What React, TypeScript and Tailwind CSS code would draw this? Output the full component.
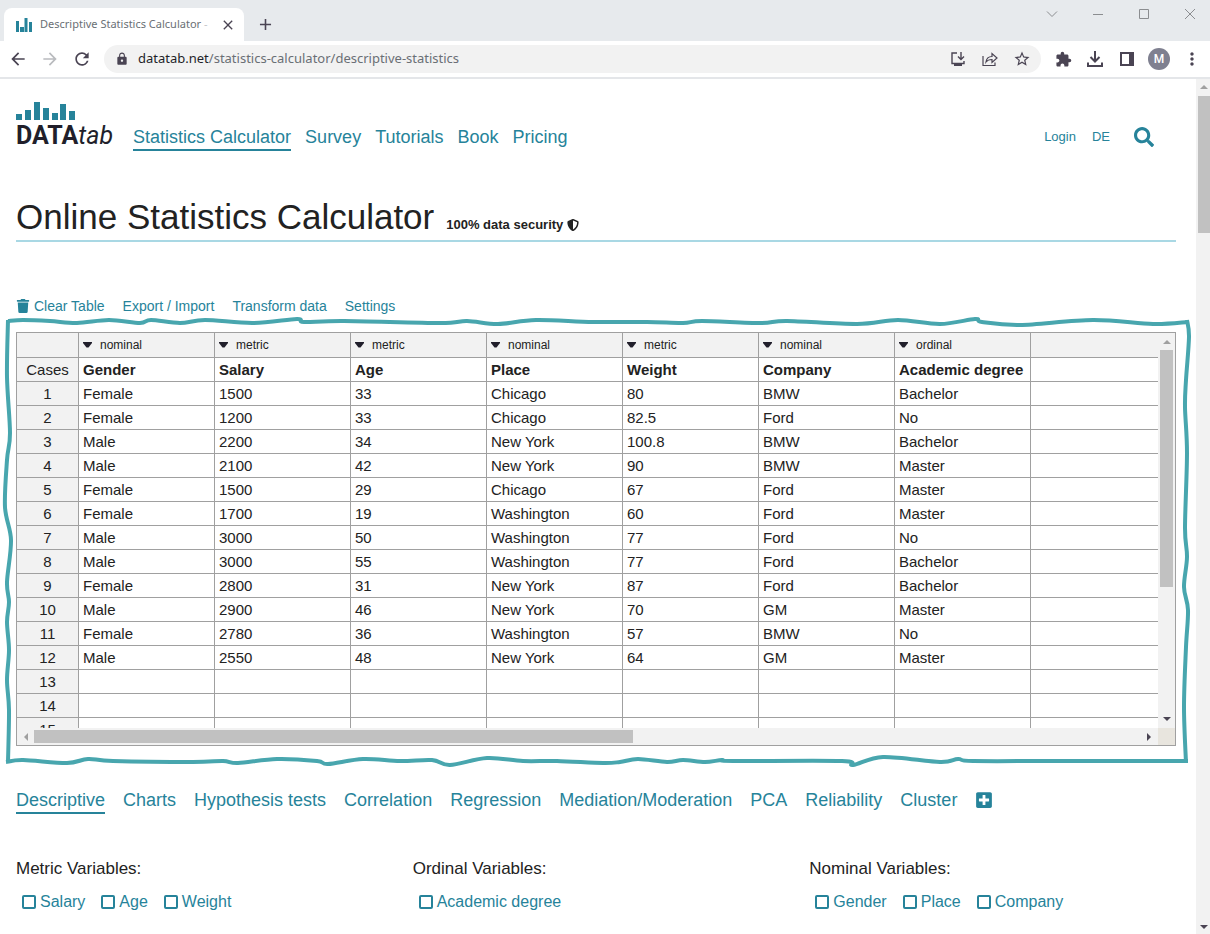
import React from 'react';
import { FaPlusSquare, FaSearch, FaShieldAlt, FaTrash } from 'react-icons/fa';
import {
  MdAdd,
  MdArrowBack,
  MdArrowForward,
  MdClose,
  MdExtension,
  MdLock,
  MdMoreVert,
  MdRefresh,
  MdStarBorder,
} from 'react-icons/md';

type Point = [number, number];

const navLinks = ['Statistics Calculator', 'Survey', 'Tutorials', 'Book', 'Pricing'];

const methods = [
  'Descriptive',
  'Charts',
  'Hypothesis tests',
  'Correlation',
  'Regression',
  'Mediation/Moderation',
  'PCA',
  'Reliability',
  'Cluster',
];

const columns = [
  { name: 'Gender', scale: 'nominal' },
  { name: 'Salary', scale: 'metric' },
  { name: 'Age', scale: 'metric' },
  { name: 'Place', scale: 'nominal' },
  { name: 'Weight', scale: 'metric' },
  { name: 'Company', scale: 'nominal' },
  { name: 'Academic degree', scale: 'ordinal' },
];

const cases = [
  ['Female', '1500', '33', 'Chicago', '80', 'BMW', 'Bachelor'],
  ['Female', '1200', '33', 'Chicago', '82.5', 'Ford', 'No'],
  ['Male', '2200', '34', 'New York', '100.8', 'BMW', 'Bachelor'],
  ['Male', '2100', '42', 'New York', '90', 'BMW', 'Master'],
  ['Female', '1500', '29', 'Chicago', '67', 'Ford', 'Master'],
  ['Female', '1700', '19', 'Washington', '60', 'Ford', 'Master'],
  ['Male', '3000', '50', 'Washington', '77', 'Ford', 'No'],
  ['Male', '3000', '55', 'Washington', '77', 'Ford', 'Bachelor'],
  ['Female', '2800', '31', 'New York', '87', 'Ford', 'Bachelor'],
  ['Male', '2900', '46', 'New York', '70', 'GM', 'Master'],
  ['Female', '2780', '36', 'Washington', '57', 'BMW', 'No'],
  ['Male', '2550', '48', 'New York', '64', 'GM', 'Master'],
  [],
  [],
  [],
];

const variableGroups = [
  { title: 'Metric Variables:', items: ['Salary', 'Age', 'Weight'] },
  { title: 'Ordinal Variables:', items: ['Academic degree'] },
  { title: 'Nominal Variables:', items: ['Gender', 'Place', 'Company'] },
];

// Hand-drawn frame around the data table, one list of points per side
const frameSides: Point[][] = [
  [
    [8, 9], [23, 8], [50, 9], [77, 11], [109, 8], [140, 11], [151, 8], [180, 11], [205, 8], [253, 11],
    [297, 7], [304, 10], [344, 9], [440, 11], [467, 9], [498, 12], [536, 8], [593, 10], [647, 10],
    [683, 11], [702, 9], [760, 11], [787, 9], [857, 12], [898, 8], [940, 12], [975, 7], [982, 10],
    [1020, 13], [1093, 8], [1153, 12], [1188, 10],
  ],
  [
    [1187, 8], [1189, 25], [1186, 68], [1185, 95], [1187, 141], [1185, 216], [1187, 245], [1184, 275],
    [1188, 298], [1186, 335], [1184, 395], [1186, 451],
  ],
  [
    [1188, 449], [1060, 449], [973, 449], [958, 447], [940, 450], [883, 445], [853, 453], [842, 449],
    [733, 449], [722, 448], [705, 450], [683, 448], [667, 450], [638, 447], [620, 450], [603, 451],
    [557, 449], [523, 449], [487, 446], [450, 453], [432, 448], [400, 449], [363, 447], [328, 452],
    [317, 449], [277, 447], [238, 451], [223, 449], [193, 450], [113, 449], [88, 447], [67, 451],
    [23, 448], [6, 450],
  ],
  [
    [8, 450], [9, 398], [7, 368], [9, 338], [7, 310], [9, 290], [7, 270], [11, 228], [5, 195],
    [7, 148], [10, 121], [7, 65], [8, 8],
  ],
];

const toPath = (points: Point[]) =>
  points.reduce((d, [x, y], i) => {
    if (i === 0) return `M${x} ${y}`;
    const [px, py] = points[i - 1];
    const [bx, by] = points[Math.max(i - 2, 0)];
    const [nx, ny] = points[Math.min(i + 1, points.length - 1)];
    return `${d} C${px + (x - bx) / 6} ${py + (y - by) / 6} ${x - (nx - px) / 6} ${y - (ny - py) / 6} ${x} ${y}`;
  }, '');

const TabStrip: React.FC = () => (
  <div className="flex h-[41px] items-start bg-[#e7eaed] pl-1">
    <div className="mt-2 flex h-[33px] w-60 items-center rounded-t-lg bg-white pl-3 pr-2">
      <svg viewBox="0 0 16 14" className="h-[14px] w-4 shrink-0 fill-[#26839a]" aria-hidden="true">
        <path d="M0 3h3v11H0zM4 9h4v5H4zM8.500 0h3v14h-3zM13 4h3v10h-3z" />
      </svg>
      <span className="ml-2 flex-1 whitespace-nowrap font-['Noto_Sans',sans-serif] text-[11px] text-[#6a6f75]">
        Descriptive Statistics Calculator <span className="text-[#c4c6c9]">-</span>
      </span>
      <button type="button" aria-label="Close tab">
        <MdClose className="size-4 text-[#4a4453]" />
      </button>
    </div>
    <button type="button" aria-label="New tab" className="ml-3 mt-[15px]">
      <MdAdd className="size-[19px] text-[#4a4453]" />
    </button>
    <div className="ml-auto mr-[14px] mt-2 flex gap-[34px] text-[#8b8d90]">
      {[
        { label: 'Search tabs', d: 'M1 3.500l5 5 5-5' },
        { label: 'Minimize', d: 'M1 6.500h10' },
        { label: 'Maximize', d: 'M1.500 1.500h9v9h-9z' },
        { label: 'Close window', d: 'M1 1l10 10M11 1L1 11' },
      ].map(({ label, d }) => (
        <button key={label} type="button" aria-label={label}>
          <svg viewBox="0 0 12 12" className="size-3 fill-none stroke-current">
            <path d={d} />
          </svg>
        </button>
      ))}
    </div>
  </div>
);

const AddressBar: React.FC = () => (
  <div className="flex h-[38px] items-center border-b-2 border-[#e4e6e9] bg-white pl-2 pr-2 text-[#4a4453]">
    <button type="button" aria-label="Back"><MdArrowBack className="size-5" /></button>
    <button type="button" aria-label="Forward" className="ml-3 text-[#b9bbbe]"><MdArrowForward className="size-5" /></button>
    <button type="button" aria-label="Reload" className="ml-3"><MdRefresh className="size-5" /></button>
    <div className="ml-3 flex h-7 flex-1 items-center rounded-full bg-[#f2f2f2] pl-[11px] pr-[10px]">
      <MdLock className="size-[14px]" />
      <div className="ml-[9px] flex-1 font-['Noto_Sans',sans-serif] text-[13px] text-[#6a6f75]">
        <span className="text-[#1f1f29]">datatab.net</span>/statistics-calculator/descriptive-statistics
      </div>
      <div className="flex items-center gap-[14px]">
        <button type="button" aria-label="Install">
          <svg viewBox="0 0 18 18" className="size-[18px] fill-none stroke-current" strokeWidth="1.400">
            <path d="M8 3H3v10.500h12V11M12 2v7M9 6.500l3 3 3-3" />
            <path d="M5 15h8" strokeWidth="2" />
          </svg>
        </button>
        <button type="button" aria-label="Share">
          <svg viewBox="0 0 18 18" className="size-[18px] fill-none stroke-current" strokeWidth="1.200">
            <path d="M2 6v9.500h12V12.500M5 12c.5-4 2.500-5.500 6-5.500V3.500l5 4.500-5 4.500V9.500c-2.500 0-4.500.5-6 2.500z" />
          </svg>
        </button>
        <button type="button" aria-label="Bookmark"><MdStarBorder className="size-[18px]" /></button>
      </div>
    </div>
    <div className="ml-[14px] flex items-center gap-3">
      <button type="button" aria-label="Extensions"><MdExtension className="size-[17px]" /></button>
      <button type="button" aria-label="Downloads">
        <svg viewBox="0 0 22 22" className="size-[22px] fill-none stroke-current" strokeWidth="2">
          <path d="M11 3v10M6.500 9l4.500 4.500L15.500 9M4 14.500V18h14v-3.500" />
        </svg>
      </button>
      <button type="button" aria-label="Side panel">
        <svg viewBox="0 0 18 18" className="size-[18px]">
          <path d="M3 3h12v12H3z" fill="none" stroke="currentColor" strokeWidth="2" />
          <path d="M11 3h4v12h-4z" fill="currentColor" />
        </svg>
      </button>
      <button type="button" aria-label="Profile" className="size-[22px] rounded-full bg-[#7f8090] font-['Roboto',sans-serif] text-[12px] font-medium text-white">
        M
      </button>
      <button type="button" aria-label="More"><MdMoreVert className="size-5" /></button>
    </div>
  </div>
);

const Logo: React.FC = () => (
  <a href="#" className="block pt-px" aria-label="DATAtab">
    <svg viewBox="0 0 60 18" className="h-[18px] w-[60px] fill-[#26839a]" aria-hidden="true">
      <path d="M0 12h6v6H0zM9 8h6v10H9zM18 0h6v18h-6zM27 6h6v12h-6zM36 11h6v7h-6zM44 2h6v16h-6zM53 9h6v9h-6z" />
    </svg>
    <span className="block whitespace-nowrap font-['Roboto',sans-serif] text-[25px] leading-[31px] text-[#211f2b]">
      <b>DATA</b>
      <i>tab</i>
    </span>
  </a>
);

const Arrow: React.FC<{ d: string; className: string }> = ({ d, className }) => (
  <svg viewBox="0 0 8 8" className={`size-2 shrink-0 ${className}`}>
    <path d={d} />
  </svg>
);

const DataTable: React.FC = () => (
  <div className="relative">
    <div className="grid grid-cols-[1fr_17px] border border-[#a0a0a0] bg-[#f2f2f2]">
      <div className="h-[395px] overflow-hidden">
        <table className="w-full table-fixed border-separate border-spacing-0 text-[15px] leading-[23px] text-[#222] [&_td]:border-b [&_td]:border-r [&_td]:border-[#a0a0a0] [&_th]:border-b [&_th]:border-r [&_th]:border-[#a0a0a0] [&_tr>:last-child]:border-r-0">
          <colgroup>
            <col className="w-[62px]" />
            {columns.map((column) => (
              <col key={column.name} className="w-[136px]" />
            ))}
            <col />
          </colgroup>
          <thead>
            <tr className="h-[25px]">
              <td />
              {columns.map((column) => (
                <td key={column.name} className="px-1">
                  <button type="button" className="flex items-center text-[12px]">
                    <svg viewBox="0 0 9 6" className="h-[6px] w-[9px] fill-[#211f2b]" aria-hidden="true">
                      <path d="M0 0h9v1L5.500 5.500h-2L0 1z" />
                    </svg>
                    <span className="ml-2">{column.scale}</span>
                  </button>
                </td>
              ))}
              <td />
            </tr>
            <tr className="h-6 bg-white text-left">
              <th className="bg-[#f2f2f2] text-center font-normal">Cases</th>
              {columns.map((column) => (
                <th key={column.name} className="whitespace-nowrap px-1 font-bold">{column.name}</th>
              ))}
              <td />
            </tr>
          </thead>
          <tbody>
            {cases.map((row, index) => (
              <tr key={index} className="h-6 bg-white">
                <th className="bg-[#f2f2f2] text-center font-normal">{index + 1}</th>
                {columns.map((column, i) => (
                  <td key={column.name} className="px-1">{row[i]}</td>
                ))}
                <td />
              </tr>
            ))}
          </tbody>
        </table>
      </div>
      <div className="flex flex-col items-center py-[5px]" aria-hidden="true">
        <Arrow d="M0 6l4-4 4 4z" className="fill-[#a0a0a0]" />
        <div className="mt-1 h-[237px] w-[13px] bg-[#c1c1c1]" />
        <Arrow d="M0 2l4 4 4-4z" className="mt-auto fill-[#4a4453]" />
      </div>
      <div className="flex h-[17px] items-center px-[5px]" aria-hidden="true">
        <Arrow d="M6 0L2 4l4 4z" className="fill-[#a0a0a0]" />
        <div className="ml-1 h-[13px] w-[53%] bg-[#c1c1c1]" />
        <Arrow d="M2 0l4 4-4 4z" className="ml-auto fill-[#4a4453]" />
      </div>
      <div className="bg-[#e8e5de]" />
    </div>
    <svg
      viewBox="0 0 1197 460"
      preserveAspectRatio="none"
      className="pointer-events-none absolute -left-4 -top-5 h-[460px] w-[calc(100%+37px)] fill-none stroke-[#48a6ae]"
      strokeWidth="4"
      aria-hidden="true"
    >
      {frameSides.map((side, index) => (
        <path key={index} d={toPath(side)} />
      ))}
    </svg>
  </div>
);

const App: React.FC = () => {
  return (
    <div className="flex min-h-screen flex-col bg-white font-['Liberation_Sans',Arial,sans-serif] text-[#222]">
      <TabStrip />
      <AddressBar />

      <div className="flex flex-1">
        <main className="min-w-0 flex-1 pl-4 pr-5 pt-[22px]">
          <header className="flex items-start text-[#26839a]">
            <Logo />
            <nav className="ml-5 mt-6 flex gap-[14px] text-[18px] leading-6">
              {navLinks.map((link, index) => (
                <a key={link} href="#" className={index === 0 ? 'border-b-2 border-[#26839a]' : ''}>
                  {link}
                </a>
              ))}
            </nav>
            <div className="ml-auto mr-[22px] mt-[26px] flex items-center gap-4 text-[13px] leading-5">
              <a href="#">Login</a>
              <a href="#">DE</a>
              <button type="button" aria-label="Search" className="ml-2"><FaSearch className="size-5" /></button>
            </div>
          </header>

          <div className="mt-[43px] flex items-baseline border-b-2 border-[#a9d8e4]">
            <h1 className="text-[35px] leading-[46px]">Online Statistics Calculator</h1>
            <span className="ml-3 flex items-center gap-1 text-[13px] font-bold">
              100% data security <FaShieldAlt className="size-3" />
            </span>
          </div>

          <div className="mt-[54px] flex gap-[18px] text-[14px] leading-5 text-[#26839a]">
            <button type="button" className="flex items-center gap-1"><FaTrash className="size-[14px]" />Clear Table</button>
            <button type="button">Export / Import</button>
            <button type="button">Transform data</button>
            <button type="button">Settings</button>
          </div>

          <div className="mt-4">
            <DataTable />
          </div>

          <nav className="mt-[42px] flex items-start gap-[18px] text-[18px] leading-6 text-[#26839a]">
            {methods.map((method, index) => (
              <a key={method} href="#" className={index === 0 ? 'border-b-2 border-[#26839a]' : ''}>
                {method}
              </a>
            ))}
            <button type="button" aria-label="More methods" className="mt-[3px]"><FaPlusSquare className="size-[18px]" /></button>
          </nav>

          <div className="mt-[43px] grid grid-cols-3 gap-x-[30px]">
            {variableGroups.map((group) => (
              <fieldset key={group.title}>
                <legend className="text-[17px] leading-6">{group.title}</legend>
                <div className="mt-[9px] flex gap-4 pl-[6px] text-[16px] leading-6 text-[#26839a]">
                  {group.items.map((item) => (
                    <label key={item} className="flex items-center gap-1">
                      <input type="checkbox" className="size-[14px] appearance-none rounded-xs border-2 border-[#26839a] bg-white checked:bg-[#26839a]" />
                      {item}
                    </label>
                  ))}
                </div>
              </fieldset>
            ))}
          </div>
        </main>

        <div className="flex w-[14px] flex-col items-end bg-[#f2f2f2] pb-[3px] pt-1" aria-hidden="true">
          <Arrow d="M0 6l4-4 4 4z" className="mr-[2px] fill-[#a0a0a0]" />
          <div className="mt-[5px] h-[137px] w-3 bg-[#c1c1c1]" />
          <Arrow d="M0 2l4 4 4-4z" className="mr-[2px] mt-auto fill-[#4a4453]" />
        </div>
      </div>
    </div>
  );
};

export default App;
